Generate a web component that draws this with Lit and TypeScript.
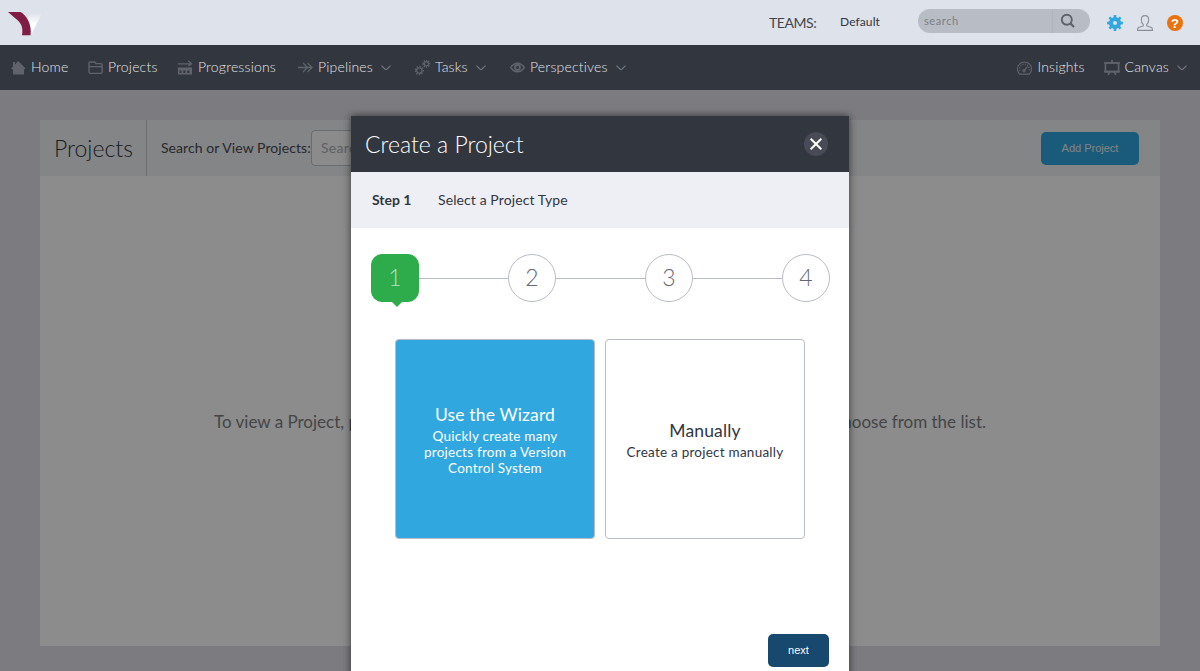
import { LitElement, html, svg, css } from "lit";
import { customElement } from "lit/decorators.js";

const gearPath = (n: number, cx: number, cy: number, outer: number, inner: number) => {
  const step = (Math.PI * 2) / n;
  const p: string[] = [];
  for (let i = 0; i < n; i++) {
    const a = i * step;
    for (const [r, o] of [[inner, -0.3], [outer, -0.2], [outer, 0.2], [inner, 0.3]]) {
      p.push(`${(cx + r * Math.sin(a + o * step)).toFixed(2)} ${(cy - r * Math.cos(a + o * step)).toFixed(2)}`);
    }
  }
  return `M${p.join("L")}Z`;
};

const icons = {
  home: svg`<path fill="currentColor" d="M0 8.4 2 6.500V2H4V4.600L7.200 1 14.600 8.400 13.600 9.200H13V14.500H2V9.200H1Z"/>`,
  folder: svg`<path fill="none" stroke="currentColor" stroke-width="1.400" d="M2.200 13.400H12.800Q14.100 13.400 14.100 12V5Q14.100 3.600 12.800 3.600H8L6.800 2H2.200Q1 2 1 3.300V12Q1 13.400 2.200 13.400ZM1.200 6.600H14"/>`,
  progress: svg`<path fill="none" stroke="currentColor" stroke-width="1.300" d="M0 3.800H13M10.300 .8 13.600 3.800 10.300 5.900"/><path fill="currentColor" fill-rule="evenodd" d="M0 7.500H14V14.500H0ZM1.500 10.400V13H3.500V10.400ZM5.300 10.400V13H7.500V10.400ZM9.300 10.400V13H11.500V10.400Z"/>`,
  arrows: svg`<path fill="none" stroke="currentColor" stroke-width="1.300" d="M0 7.500H13.500M5 3 9.500 7.500 5 12M9.500 3 14 7.500 9.500 12"/>`,
  gears: svg`<g fill="none" stroke="currentColor"><path stroke-width="1.500" stroke-dasharray="1.500 1.320" d="M.3 10.500a4 4 0 1 0 8 0a4 4 0 1 0-8 0"/><circle cx="4.300" cy="10.500" r="2.700" stroke-width="1.300"/><path stroke-width="1.400" stroke-dasharray="1.300 1.050" d="M8 3.800a3.300 3.300 0 1 0 6.600 0a3.300 3.300 0 1 0-6.600 0"/><circle cx="11.300" cy="3.800" r="2.100" stroke-width="1.200"/></g>`,
  eye: svg`<path fill="none" stroke="currentColor" stroke-width="1.400" d="M.7 7.500Q3.500 3.300 7.500 3.300T14.300 7.500Q11.500 11.700 7.500 11.700T.7 7.500Z"/><circle cx="7.500" cy="7.500" r="2.500" fill="none" stroke="currentColor" stroke-width="1.800"/>`,
  gauge: svg`<g fill="none" stroke="currentColor"><path stroke-width="1.200" d="M2.800 14.200A7 7 0 1 1 12.200 14.200Z"/><path stroke-width="1.400" stroke-dasharray="1 1.400" d="M3.200 10.800A4.700 4.700 0 1 1 11.800 10.800"/><path stroke-width="1.200" d="M7 10.800 10.500 6.300"/><circle cx="7" cy="10.800" r="1.100" stroke-width="1.200"/></g>`,
  board: svg`<g fill="none" stroke="currentColor" stroke-width="1.700"><path d="M1.400 3H14.600V11.700H1.400ZM8 0V3M5.500 12 4.300 15M10.500 12 11.700 15"/><path d="M0 3H16M0 11.700H16"/></g>`,
};
type IconName = keyof typeof icons;

@customElement("nav-item")
export class NavItem extends LitElement {
  static properties = { icon: {}, label: {}, menu: { type: Boolean } };
  declare icon: IconName;
  declare label: string;
  declare menu: boolean;
  static styles = css`
    :host { display: flex; align-items: center; height: 45px; color: #e2e3e6; }
    .glyph { width: 16px; height: 16px; color: #60636b; flex: none; margin: 1px 4px 0 0; }
    .label { font-size: 14px; line-height: 20px; white-space: nowrap; letter-spacing: 0.18px; margin-top: -1px; }
    .chevron { width: 10px; height: 6px; margin: 1px 0 0 8px; color: #72757c; }
  `;
  render() {
    return html`<svg class="glyph" viewBox="0 0 16 16">${icons[this.icon]}</svg><span class="label">${this.label}</span>${this.menu
      ? html`<svg class="chevron" viewBox="0 0 10 6"><path d="M.4 .6 4.200 4.300Q5 4.900 5.800 4.300L9.600 .6" fill="none" stroke="currentColor" stroke-width="1.200"/></svg>`
      : ""}`;
  }
}

@customElement("app-root")
export class AppRoot extends LitElement {
  static styles = css`
    * { box-sizing: border-box; }
    :host { display: flex; flex-direction: column; height: 671px; overflow: hidden; position: relative; background: #e0e1ea; font-family: Lato, "Open Sans", sans-serif; color: #32363f; }
    .top { height: 45px; flex: none; background: #dee2ea; display: flex; align-items: center; padding: 0 17px 0 8px; }
    .logo { width: 36px; height: 26px; margin-right: auto; }
    .teams { font-size: 14px; letter-spacing: -0.45px; color: #43464c; width: 71px; white-space: nowrap; }
    .team { font-size: 12px; letter-spacing: 0.1px; color: #32363f; width: 78px; white-space: nowrap; margin-top: -2px; }
    .search { width: 172px; height: 24px; margin-top: -3px; border-radius: 12px; background: #b8bcc5; display: flex; align-items: center; font-size: 11px; letter-spacing: 0.6px; color: #7c7f87; padding-left: 6px; margin-right: 17px; overflow: hidden; }
    .search-text { flex: 1; margin-top: -1px; }
    .search-button { width: 38px; height: 24px; border-left: 1px solid #b0b3bc; display: flex; padding: 4px 0 0 7px; color: #5e616a; }
    .tool { width: 16px; height: 16px; flex: none; margin-right: 14px; margin-top: 1px; }
    .tool:last-child { margin-right: 0; }
    .mark { font: bold 13px "Liberation Sans", sans-serif; fill: #fff; }
    nav { height: 45px; flex: none; background: #32363f; display: flex; padding: 0 13px 0 11px; font-weight: 300; }
    .n1 { width: 77px; } .n2 { width: 90px; } .n3 { width: 120px; } .n4 { width: 117px; } .n5 { width: 95px; }
    .n6 { margin-right: auto; } .n7 { width: 87px; }
    .page { flex: 1; padding: 30px 40px 25px; display: flex; flex-direction: column; position: relative; }
    .bar { height: 56px; flex: none; background: #f0f2f4; display: flex; align-items: center; padding-right: 21px; }
    .bar-title { width: 107px; height: 56px; line-height: 56px; padding-left: 14px; border-right: 1px solid #c8cacf; font-size: 23px; font-weight: 300; }
    .bar-label { width: 164px; padding: 0 0 2px 14px; font-size: 14px; letter-spacing: 0.07px; color: #484b54; white-space: nowrap; }
    .bar-input { width: 240px; height: 36px; line-height: 33px; border: 1px solid #c3c5cb; border-radius: 4px; background: #fdfdfd; padding-left: 9px; font-size: 14px; letter-spacing: 0.3px; color: #aeb0b4; margin-right: auto; }
    .button { display: flex; align-items: center; justify-content: center; font: 11px "Liberation Sans", sans-serif; border-radius: 5px; height: 33px; color: #fff; }
    .add { width: 98px; background: #31a7e0; color: #eee; }
    .empty { flex: 1; background: #fff; display: flex; justify-content: space-between; padding: 235px 174px 0; font-size: 17px; line-height: 22px; color: #7c7e83; white-space: nowrap; }
    .shade { position: absolute; inset: 0; background: rgba(0, 0, 0, 0.45); }
    .modal { position: absolute; left: 351px; top: 116px; width: 498px; height: 575px; background: #fff; box-shadow: 0 0 8px rgba(0, 0, 0, 0.6); }
    .modal-head { height: 56px; background: #32363f; color: #fff; font-size: 23px; font-weight: 300; display: flex; align-items: center; justify-content: space-between; padding: 0 21px 0 14px; }
    .close { width: 24px; height: 24px; }
    .step-bar { height: 56px; background: #eeeff4; display: flex; align-items: center; font-size: 14px; padding: 0 0 2px 21px; }
    .step-no { font-weight: 700; width: 66px; }
    .step-name { letter-spacing: 0.1px; }
    .steps { display: flex; align-items: center; padding: 26px 19px 0 20px; }
    .step { width: 48px; height: 48px; flex: none; border: 1px solid #b9bcc6; border-radius: 50%; font-size: 23px; font-weight: 300; display: flex; justify-content: center; line-height: 45px; color: #666971; position: relative; }
    .step.on { background: #2eab4a; border-color: #2eab4a; color: #b4e1be; border-radius: 11px; }
    .step.on::after { content: ""; position: absolute; left: 19px; top: 46px; border: 6px solid transparent; border-top-color: #2eab4a; border-bottom: 0; }
    .line { flex: 1; height: 1px; background: #b9bcc6; margin-top: 1px; }
    .cards { display: flex; gap: 10px; padding: 37px 44px 0; }
    .card { width: 200px; height: 200px; border: 1px solid #b9bcc6; border-radius: 4px; display: flex; flex-direction: column; align-items: center; justify-content: center; text-align: center; padding: 0 20px; }
    .card.on { background: #31a7e0; color: #fff; }
    .card-title { font-size: 17.5px; letter-spacing: 0.15px; line-height: 24px; white-space: nowrap; }
    .card-text { font-size: 13.5px; letter-spacing: 0.24px; line-height: 16px; white-space: nowrap; margin-top: 1px; }
    .foot { padding: 95px 20px 0; display: flex; justify-content: flex-end; }
    .next { width: 61px; background: #17486d; padding-bottom: 1px; }
  `;
  render() {
    return html`
      <header class="top">
        <svg class="logo" viewBox="0 0 36 26">
          <defs><linearGradient id="fade" x1="0" y1="1" x2="0" y2="0"><stop offset=".45" stop-color="#fff"/><stop offset="1" stop-color="#fff" stop-opacity="0"/></linearGradient></defs>
          <path fill="url(#fade)" d="M23.500 3H34L24 23 19 9Z"/>
          <path fill="#7f1d45" d="M0 2H12.500C19 5.500 24 15 22.500 25.300H14C15.500 17 13 12.500 7.500 8.500Z"/>
        </svg>
        <span class="teams">TEAMS:</span><span class="team">Default</span>
        <div class="search"><span class="search-text">search</span><span class="search-button">
          <svg width="16" height="16" viewBox="0 0 16 16"><circle cx="6.800" cy="6.700" r="5" fill="none" stroke="currentColor" stroke-width="1.900"/><path d="M10.300 10.300 14 14" stroke="currentColor" stroke-width="2.200"/></svg></span></div>
        <svg class="tool" viewBox="0 0 16 16"><path fill="#31a7e0" fill-rule="evenodd" d="${gearPath(8, 8, 8, 8, 6)}M10 8A2 2 0 1 0 6 8A2 2 0 1 0 10 8Z"/></svg>
        <svg class="tool" viewBox="0 0 16 16"><path fill="none" stroke="#8b8e96" stroke-width="1.100" d="M6.300 9.700C4.700 8.200 4.200 6.500 4.300 4.300 4.400 1.800 5.900.6 8 .6S11.600 1.800 11.700 4.300C11.800 6.500 11.300 8.200 9.700 9.700V10.900L14.500 12.500Q15.500 13 15.500 15.400H.5Q.5 13 1.500 12.500L6.300 10.900Z"/></svg>
        <svg class="tool" viewBox="0 0 16 16"><circle cx="8" cy="8" r="8" fill="#e8730f"/><text class="mark" x="8" y="12.600" text-anchor="middle">?</text></svg>
      </header>
      <nav>
        <nav-item class="n1" icon="home" label="Home"></nav-item>
        <nav-item class="n2" icon="folder" label="Projects"></nav-item>
        <nav-item class="n3" icon="progress" label="Progressions"></nav-item>
        <nav-item class="n4" icon="arrows" label="Pipelines" menu></nav-item>
        <nav-item class="n5" icon="gears" label="Tasks" menu></nav-item>
        <nav-item class="n6" icon="eye" label="Perspectives" menu></nav-item>
        <nav-item class="n7" icon="gauge" label="Insights"></nav-item>
        <nav-item class="n8" icon="board" label="Canvas" menu></nav-item>
      </nav>
      <main class="page">
        <section class="bar">
          <div class="bar-title">Projects</div>
          <div class="bar-label">Search or View Projects:</div>
          <div class="bar-input">Search</div>
          <div class="button add">Add Project</div>
        </section>
        <section class="empty"><span>To view a Project, please search</span><span>or choose from the list.</span></section>
        <div class="shade"></div>
      </main>
      <div class="modal">
        <div class="modal-head"><span class="modal-title">Create a Project</span>
          <svg class="close" viewBox="0 0 24 24"><circle cx="12" cy="12" r="12" fill="#484b56"/><path d="M6.700 6.700 17.300 17.300M17.300 6.700 6.700 17.300" stroke="#fff" stroke-width="2"/></svg></div>
        <div class="step-bar"><span class="step-no">Step 1</span><span class="step-name">Select a Project Type</span></div>
        <div class="steps"><div class="step on">1</div><div class="line"></div><div class="step">2</div><div class="line"></div><div class="step">3</div><div class="line"></div><div class="step">4</div></div>
        <div class="cards">
          <div class="card on"><div class="card-title">Use the Wizard</div><div class="card-text">Quickly create many<br>projects from a Version<br>Control System</div></div>
          <div class="card"><div class="card-title">Manually</div><div class="card-text">Create a project manually</div></div>
        </div>
        <div class="foot"><div class="button next">next</div></div>
      </div>`;
  }
}
